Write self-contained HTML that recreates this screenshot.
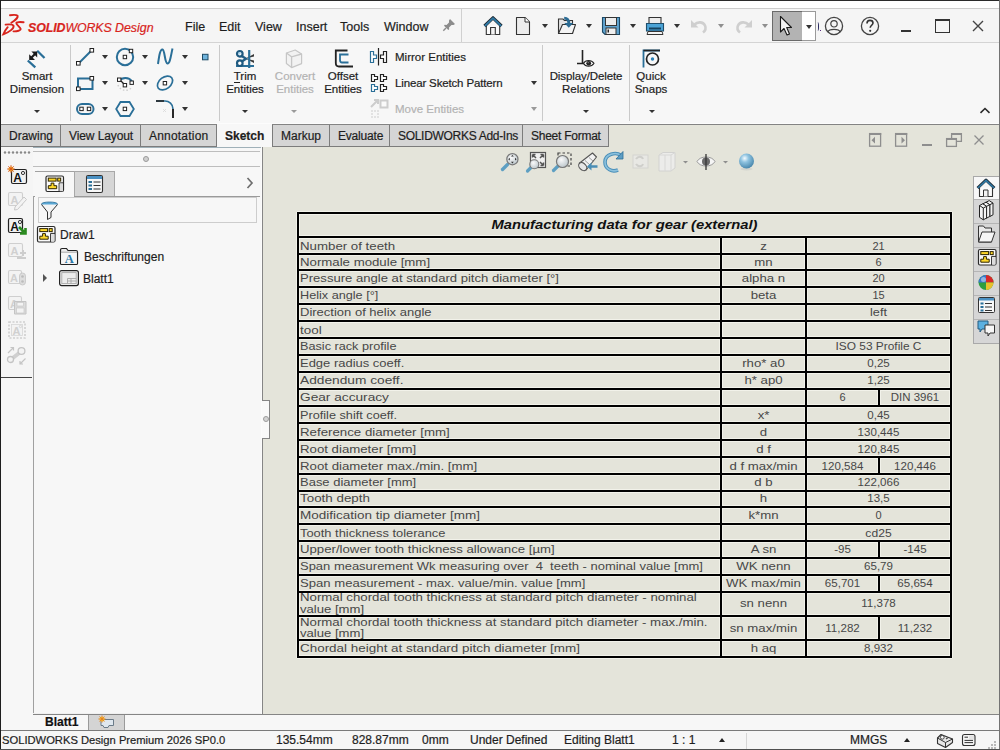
<!DOCTYPE html>
<html><head><meta charset="utf-8">
<style>
*{margin:0;padding:0;box-sizing:border-box}
html,body{width:1000px;height:750px;overflow:hidden;background:#f5f5f5;font-family:"Liberation Sans",sans-serif;color:#1a1a1a;position:relative}
.a{position:absolute}
svg{position:absolute;overflow:visible}
.t{position:absolute;white-space:nowrap;font-size:12px;line-height:14px;color:#1e1e1e;-webkit-text-stroke:0.2px currentColor}
.rb{position:absolute;white-space:nowrap;font-size:11.5px;line-height:13px;color:#1e1e1e;text-align:center;-webkit-text-stroke:0.2px currentColor}
.dd{position:absolute;width:0;height:0;border-left:3px solid transparent;border-right:3px solid transparent;border-top:3px solid #333}
#tbl .h{position:absolute;height:2px;background:#000}
#tbl .hh{box-shadow:0 -1px 0 #f2f2ea,0 1px 0 #f2f2ea}
#tbl .v{position:absolute;width:2px;background:#000}
#tbl .hv{box-shadow:-1px 0 0 #f2f2ea,1px 0 0 #f2f2ea}
#tbl .c{position:absolute;white-space:nowrap;font-size:11px;line-height:13px;color:#474747}
#tbl .c.l{transform-origin:0 0}
#tbl .c.m{text-align:center}
#tbl .c.ti{text-align:center;font-weight:bold;font-style:italic;font-size:13px;line-height:22px;color:#111;transform:scaleX(1.137)}
</style></head><body>

<!-- frame -->
<div class="a" style="left:0;top:0;width:1000px;height:1px;background:#2a2a2a"></div>
<div class="a" style="left:1px;top:1px;width:998px;height:7px;background:#fff"></div>
<div class="a" style="left:1px;top:8px;width:998px;height:1px;background:#cdcdcd"></div>
<div class="a" style="left:1px;top:9px;width:998px;height:33px;background:#f5f5f5"></div>
<div class="a" style="left:1px;top:42px;width:998px;height:1px;background:#d4d4d4"></div>
<div class="a" style="left:1px;top:43px;width:998px;height:81px;background:#f7f7f7"></div>
<div class="a" style="left:1px;top:123px;width:998px;height:1px;background:#fcfcfc"></div>
<div class="a" style="left:1px;top:124px;width:998px;height:1px;background:#838383"></div>
<div class="a" style="left:263px;top:125px;width:736px;height:589px;background:#e4e4da"></div>
<div class="a" style="left:1px;top:147px;width:262px;height:567px;background:#f7f7f7"></div>
<div class="a" style="left:1px;top:714px;width:998px;height:16px;background:#f7f7f7"></div>
<div class="a" style="left:1px;top:730px;width:998px;height:1px;background:#7a7a7a"></div>
<div class="a" style="left:1px;top:731px;width:998px;height:19px;background:#f6f6f6"></div>
<div class="a" style="left:0;top:0;width:1px;height:750px;background:#1e1e1e"></div>
<div class="a" style="left:999px;top:0;width:1px;height:750px;background:#737373"></div>

<!-- titlebar -->
<svg style="left:0;top:0" width="30" height="42" viewBox="0 0 30 42">
<g fill="none" stroke="#d8241c" stroke-width="1.9" stroke-linecap="round">
<path d="M10 15.3 C13 14.8 16.5 14.8 17.6 15.8 C18.2 17.2 15 20.5 11.3 22.8"/>
<path d="M5.6 24.6 C9 24.2 13 24.3 13.6 25.8 C14 28.5 9 32.5 3.3 34.3 C4.5 31.5 6 29.2 7.7 27.2"/>
<path d="M23.6 22.2 C20 21.8 16.8 22 16.3 23 C16 24.5 20 27 20.6 28.7 C21 30.5 17 31.5 13.5 31.4"/>
</g></svg>
<div class="t" style="left:28px;top:20px;font-size:12.4px;line-height:16px;color:#d8241c;font-style:italic;letter-spacing:-0.1px"><b style="font-weight:bold">SOLID</b>WORKS</div>
<div class="t" style="left:115px;top:20px;font-size:12.4px;line-height:16px;color:#d8241c;font-style:italic">Design</div>
<div class="t" style="left:185px;top:20px;font-size:12.5px;line-height:15px">File</div>
<div class="t" style="left:219px;top:20px;font-size:12.5px;line-height:15px">Edit</div>
<div class="t" style="left:255px;top:20px;font-size:12.5px;line-height:15px">View</div>
<div class="t" style="left:296px;top:20px;font-size:12.5px;line-height:15px">Insert</div>
<div class="t" style="left:340px;top:20px;font-size:12.5px;line-height:15px">Tools</div>
<div class="t" style="left:384px;top:20px;font-size:12.5px;line-height:15px">Window</div>
<!-- pin -->
<svg style="left:441px;top:17px" width="16" height="16" viewBox="0 0 16 16">
<path d="M9 2 L14 7 L12.5 8 L10.5 8 L8 10.5 L8.2 12.3 L7.3 13 L3 8.7 L3.7 7.8 L5.5 8 L8 5.5 L8 3.5 Z" fill="#8c8c8c"/>
<path d="M5 11 L2.3 13.7" stroke="#8c8c8c" stroke-width="1.4"/>
</svg>
<div class="a" style="left:461px;top:9px;width:1px;height:33px;background:#d0d0d0"></div>
<!-- home -->
<svg style="left:483px;top:16px" width="20" height="20" viewBox="0 0 20 20">
<path d="M3.3 9.5 V18.5 H16.7 V9.5" fill="#fbfbfb" stroke="#333" stroke-width="1.1"/>
<path d="M7.6 18.5 V11.5 H12.3 V18.5" fill="#f3f3f3" stroke="#333" stroke-width="1.1"/>
<path d="M1.5 10 L10 1.8 L18.5 10" fill="none" stroke="#1f2a33" stroke-width="3.2" stroke-linejoin="round"/>
<path d="M1.8 10 L10 2.2 L18.2 10" fill="none" stroke="#2f7aa6" stroke-width="1.8" stroke-linejoin="round"/>
</svg>
<!-- new doc -->
<svg style="left:515px;top:16px" width="16" height="20" viewBox="0 0 16 20">
<path d="M1.5 1.5 H10 L14.5 6 V18.5 H1.5 Z" fill="#ededed" stroke="#333" stroke-width="1.1" stroke-linejoin="round"/>
<path d="M10 1.5 V6 H14.5" fill="#fff" stroke="#333" stroke-width="1"/>
</svg>
<div class="dd" style="left:542px;top:24px;border-width:4px 3px 0 3px"></div>
<!-- open -->
<svg style="left:557px;top:16px" width="20" height="19" viewBox="0 0 20 19">
<path d="M1.5 3 H6 L7.5 4.5 H15.5 V17.5 H1.5 Z" fill="#e4e4e4" stroke="#333" stroke-width="1.1"/>
<path d="M1.5 17.5 L5.5 8.5 H18.5 L15.5 17.5 Z" fill="#f4f4f4" stroke="#333" stroke-width="1.1" stroke-linejoin="round"/>
<path d="M7.2 2.2 C10 2.2 11.8 3.8 11.8 7.5" fill="none" stroke="#2b6b93" stroke-width="2.8"/>
<path d="M7.3 7 H16.3 L11.8 11.8 Z" fill="#2b6b93"/>
</svg>
<div class="dd" style="left:586px;top:24px;border-width:4px 3px 0 3px"></div>
<!-- save -->
<svg style="left:601px;top:16px" width="20" height="20" viewBox="0 0 20 20">
<path d="M1.5 1.5 H18.5 V18.5 H4 L1.5 16 Z" fill="#5fa3cf" stroke="#1d4a66" stroke-width="1.1"/>
<rect x="4.5" y="1.5" width="11" height="8" fill="#ececec" stroke="#333" stroke-width="1"/>
<rect x="5" y="12" width="10" height="6.5" fill="#f0f0f0" stroke="#333" stroke-width="1"/>
<rect x="6.5" y="13.5" width="1.5" height="3" fill="#222"/>
</svg>
<div class="dd" style="left:630px;top:24px;border-width:4px 3px 0 3px"></div>
<!-- print -->
<svg style="left:645px;top:16px" width="20" height="20" viewBox="0 0 20 20">
<path d="M4 1.5 H16 V8 H4 Z" fill="#ececec" stroke="#333" stroke-width="1.1"/>
<path d="M1.5 7.5 H18.5 V15 H1.5 Z" fill="#4ba3d6" stroke="#1f4e6c" stroke-width="1.1"/>
<rect x="4" y="11.5" width="12" height="2" fill="#16425e"/>
<path d="M3 15.5 H17 L18 18.5 H2 Z" fill="#f4f4f4" stroke="#333" stroke-width="1"/>
</svg>
<div class="dd" style="left:674px;top:24px;border-width:4px 3px 0 3px"></div>
<!-- undo -->
<svg style="left:690px;top:18px" width="18" height="16" viewBox="0 0 18 16">
<path d="M4.5 6.5 C7.5 3.5 13 3.5 15 7.5 C16.3 10.5 15 13 13 14.5" fill="none" stroke="#cfcfcf" stroke-width="2.6"/>
<path d="M1 2 L1 9.5 L8.5 9.5 Z" fill="#cfcfcf"/>
</svg>
<div class="dd" style="left:718px;top:24px;border-width:4px 3px 0 3px;border-top-color:#8f8f8f"></div>
<!-- redo -->
<svg style="left:735px;top:18px" width="18" height="16" viewBox="0 0 18 16">
<path d="M13.5 6.5 C10.5 3.5 5 3.5 3 7.5 C1.7 10.5 3 13 5 14.5" fill="none" stroke="#cfcfcf" stroke-width="2.6"/>
<path d="M17 2 L17 9.5 L9.5 9.5 Z" fill="#cfcfcf"/>
</svg>
<div class="dd" style="left:762px;top:24px;border-width:4px 3px 0 3px;border-top-color:#8f8f8f"></div>
<!-- select -->
<div class="a" style="left:772px;top:11px;width:31px;height:30px;background:#b3b3b3;border:1px solid #6a6a6a"></div>
<div class="a" style="left:802px;top:11px;width:14px;height:30px;background:#fff;border:1px solid #9a9a9a;border-left:none"></div>
<svg style="left:779px;top:15px" width="16" height="22" viewBox="0 0 16 22">
<path d="M1.5 1.5 L1.5 17 L5 13.5 L8 20 L10.5 19 L7.7 12.5 L12.5 12.5 Z" fill="#f4f4f4" stroke="#1a1a1a" stroke-width="1.1" stroke-linejoin="round"/>
</svg>
<div class="dd" style="left:806px;top:25px;border-width:4px 3px 0 3px"></div>
<div class="a" style="left:816px;top:22px;width:3px;height:9px;border-right:1.5px solid #2a2a60;border-radius:0 50% 50% 0"></div>
<div class="a" style="left:820px;top:30px;width:1px;height:1px;background:#5b2a80"></div>
<!-- user -->
<svg style="left:824px;top:16px" width="20" height="20" viewBox="0 0 20 20">
<circle cx="10" cy="10" r="8.6" fill="none" stroke="#444" stroke-width="1.3"/>
<circle cx="10" cy="7.8" r="3.2" fill="none" stroke="#444" stroke-width="1.2"/>
<path d="M3.8 16 C5 12.5 15 12.5 16.2 16" fill="none" stroke="#444" stroke-width="1.2"/>
</svg>
<!-- help -->
<svg style="left:860px;top:16px" width="20" height="20" viewBox="0 0 20 20">
<circle cx="10" cy="10" r="8.6" fill="none" stroke="#444" stroke-width="1.3"/>
<path d="M7 7.5 C7 5 8.5 4.4 10 4.4 C11.7 4.4 13 5.5 13 7 C13 9 10.2 9.5 10.2 11.8" fill="none" stroke="#333" stroke-width="1.6"/>
<circle cx="10.2" cy="14.8" r="1.1" fill="#333"/>
</svg>
<div class="a" style="left:901px;top:30px;width:10px;height:2px;background:#333"></div>
<div class="a" style="left:935px;top:19px;width:15px;height:14px;border:1.2px solid #333;border-top:2.5px solid #333"></div>
<svg style="left:972px;top:20px" width="12" height="12" viewBox="0 0 12 12">
<path d="M1 1 L11 11 M11 1 L1 11" stroke="#444" stroke-width="1.4"/>
</svg>

<!-- ribbon -->
<!-- smart dimension -->
<svg style="left:27px;top:49px" width="20" height="20" viewBox="0 0 20 20">
<path d="M0.8 11.5 L8.3 18.3" stroke="#2a6f98" stroke-width="2.3"/>
<path d="M10.2 1.8 L17.5 9" stroke="#2a6f98" stroke-width="2.3"/>
<path d="M4 9 L8 5" stroke="#1a1a1a" stroke-width="2.2"/>
<path d="M2.2 5.2 V11 H8 Z" fill="#1a1a1a"/>
<path d="M10.2 2.6 V8.4 L4.4 2.6 Z" fill="#1a1a1a"/>
</svg>
<div class="rb" style="left:0;width:74px;top:70px">Smart</div>
<div class="rb" style="left:0;width:74px;top:83px">Dimension</div>
<div class="dd" style="left:34px;top:110px"></div>
<div class="a" style="left:70px;top:45px;width:1px;height:76px;background:#cacaca"></div>
<!-- sketch tool grid -->
<svg style="left:75px;top:47px" width="140" height="72" viewBox="0 0 140 72">
<g stroke-linejoin="miter">
<!-- line -->
<path d="M3.5 16.5 L16.5 3.5" stroke="#2a6f98" stroke-width="2"/>
<rect x="1.5" y="14.5" width="3.6" height="3.6" fill="#fff" stroke="#222" stroke-width="1"/>
<rect x="15" y="1.5" width="3.6" height="3.6" fill="#fff" stroke="#222" stroke-width="1"/>
<!-- rectangle -->
<rect x="3" y="31.5" width="14.5" height="10.5" fill="none" stroke="#2a6f98" stroke-width="2"/>
<rect x="1.5" y="40" width="3.6" height="3.6" fill="#fff" stroke="#222" stroke-width="1"/>
<rect x="15" y="29.5" width="3.6" height="3.6" fill="#fff" stroke="#222" stroke-width="1"/>
<!-- slot -->
<rect x="2" y="57" width="16.5" height="10" rx="5" fill="none" stroke="#2a6f98" stroke-width="2"/>
<rect x="4.8" y="60.2" width="3.4" height="3.4" fill="#fff" stroke="#222" stroke-width="1"/>
<rect x="12.3" y="60.2" width="3.4" height="3.4" fill="#fff" stroke="#222" stroke-width="1"/>
<!-- circle -->
<circle cx="50" cy="10" r="8.2" fill="none" stroke="#2a6f98" stroke-width="2"/>
<rect x="48.2" y="8.3" width="3.4" height="3.4" fill="#fff" stroke="#222" stroke-width="1"/>
<rect x="54.3" y="2.3" width="3.4" height="3.4" fill="#fff" stroke="#222" stroke-width="1"/>
<!-- arc -->
<path d="M44 34 A8 8 0 0 1 57 34.5" fill="none" stroke="#2a6f98" stroke-width="2"/>
<path d="M43 38 A8 8 0 0 0 57 40" fill="none" stroke="#d0d0d0" stroke-width="1.5" stroke-dasharray="1.5 2"/>
<path d="M44 32 L50 38" stroke="#222" stroke-width="1.3"/>
<rect x="42.5" y="31" width="3.4" height="3.4" fill="#fff" stroke="#222" stroke-width="1"/>
<rect x="48.2" y="36.5" width="3.4" height="3.4" fill="#fff" stroke="#222" stroke-width="1"/>
<rect x="55" y="34" width="3.4" height="3.4" fill="#fff" stroke="#222" stroke-width="1"/>
<!-- polygon -->
<path d="M45.5 55 L54.5 55 L58.8 62 L54.5 69 L45.5 69 L41.2 62 Z" fill="none" stroke="#2a6f98" stroke-width="1.8"/>
<rect x="48.2" y="60.2" width="3.4" height="3.4" fill="#fff" stroke="#222" stroke-width="1"/>
<!-- spline -->
<path d="M83 17 C84 10 85 2 87.5 2.5 C90 3 89.5 16 92.5 16.5 C95 16.8 96 8 97.5 1.5" fill="none" stroke="#2a6f98" stroke-width="2"/>
<!-- ellipse -->
<ellipse cx="90" cy="36" rx="8.5" ry="5.8" transform="rotate(-38 90 36)" fill="none" stroke="#2a6f98" stroke-width="1.7"/>
<rect x="88.2" y="34.5" width="3.4" height="3.4" fill="#fff" stroke="#222" stroke-width="1"/>
<!-- fillet -->
<path d="M81 54 H90 C94 54 98 57 98 62" fill="none" stroke="#2a6f98" stroke-width="1.6"/>
<path d="M81 54 H89" stroke="#222" stroke-width="1.6"/>
<path d="M98 62 V71" stroke="#111" stroke-width="1.8"/>
<path d="M88 62 L91 65 M91 62 L88 65" stroke="#d8d8d8" stroke-width="0.8"/>
<!-- point -->
<rect x="127.5" y="7.3" width="5.5" height="5.5" fill="#6fb3dc" stroke="#1d4a66" stroke-width="1"/>
</g></svg>
<div class="dd" style="left:102px;top:55px;border-width:4px 3px 0 3px"></div>
<div class="dd" style="left:102px;top:81px;border-width:4px 3px 0 3px"></div>
<div class="dd" style="left:102px;top:107px;border-width:4px 3px 0 3px"></div>
<div class="dd" style="left:142px;top:55px;border-width:4px 3px 0 3px"></div>
<div class="dd" style="left:142px;top:81px;border-width:4px 3px 0 3px"></div>
<div class="dd" style="left:182px;top:55px;border-width:4px 3px 0 3px"></div>
<div class="dd" style="left:182px;top:81px;border-width:4px 3px 0 3px"></div>
<div class="dd" style="left:182px;top:107px;border-width:4px 3px 0 3px"></div>
<div class="a" style="left:219px;top:45px;width:1px;height:76px;background:#cacaca"></div>
<!-- trim -->
<svg style="left:235px;top:49px" width="20" height="20" viewBox="0 0 20 20">
<path d="M10.5 9.5 L19 5 L19 7.5 Z M10.5 9.5 L19 14 L19 11.5 Z" fill="#3a3a3a"/>
<path d="M14.2 1 V19 M1 17 H19" stroke="#2a6f98" stroke-width="2.2"/>
<path d="M6 6.5 L11 9.8 L6 13" fill="none" stroke="#245f86" stroke-width="2.4"/>
<circle cx="4.8" cy="4.8" r="2.8" fill="#fff" stroke="#1f5a80" stroke-width="2.2"/>
<circle cx="4.8" cy="14.2" r="2.8" fill="#fff" stroke="#1f5a80" stroke-width="2.2"/>
<circle cx="4.3" cy="4.3" r="1.2" fill="#7cc0e6" opacity="0.6"/>
</svg>
<div class="rb" style="left:214px;width:62px;top:70px"><u style="text-decoration:none;border-bottom:1px solid #222">T</u>rim</div>
<div class="rb" style="left:214px;width:62px;top:83px">Entities</div>
<div class="dd" style="left:242px;top:110px"></div>
<!-- convert -->
<svg style="left:285px;top:49px" width="20" height="20" viewBox="0 0 20 20">
<path d="M10.2 1 L16.6 5 V14.6 L6.6 18.6 L1.4 14.6 V4 Z" fill="#f2f2f2" stroke="#c6c6c6" stroke-width="1.2" stroke-linejoin="round"/>
<path d="M1.4 4 L6.6 7.8 L16.6 5 M6.6 7.8 V18.6" fill="none" stroke="#c6c6c6" stroke-width="1.3"/>
</svg>
<div class="rb" style="left:264px;width:62px;top:70px;color:#b3b3b3">Convert</div>
<div class="rb" style="left:264px;width:62px;top:83px;color:#b3b3b3">Entities</div>
<div class="dd" style="left:291px;top:110px;border-top-color:#9a9a9a"></div>
<!-- offset -->
<svg style="left:334px;top:49px" width="20" height="20" viewBox="0 0 20 20">
<path d="M13.5 1.5 H1.8 V14 C1.8 16 3 17.5 5 17.5 H19" fill="none" stroke="#222" stroke-width="1.8"/>
<path d="M14.5 5.5 H6 V11 C6 12.5 6.8 13.5 8 13.5 H14.5" fill="none" stroke="#2a6f98" stroke-width="1.8"/>
</svg>
<div class="rb" style="left:312px;width:62px;top:70px">Offset</div>
<div class="rb" style="left:312px;width:62px;top:83px">Entities</div>
<!-- mirror / linear / move -->
<svg style="left:369px;top:49px" width="20" height="72" viewBox="0 0 20 72">
<path d="M1.5 2.5 H4.5 V6 H7.5 V9.5 H4.5 V13.5 H1.5 Z" fill="#fff" stroke="#2a6f98" stroke-width="1.2"/>
<path d="M17.5 2.5 H14.5 V6 H11.5 V9.5 H14.5 V13.5 H17.5 Z" fill="#fff" stroke="#222" stroke-width="1.2"/>
<path d="M9.5 -1 V16.5" stroke="#222" stroke-width="1.2"/>
<path d="M2.5 25.5 H5.5 V27.5 H8.5 V30.5 H5.5 V32.5 H2.5 Z" fill="#fff" stroke="#222" stroke-width="1.2"/><path d="M11.5 25.5 H14.5 V27.5 H17.5 V30.5 H14.5 V32.5 H11.5 Z" fill="#fff" stroke="#222" stroke-width="1.2"/><path d="M2.5 35.5 H5.5 V37.5 H8.5 V40.5 H5.5 V42.5 H2.5 Z" fill="#fff" stroke="#2a6f98" stroke-width="1.2"/><path d="M11.5 35.5 H14.5 V37.5 H17.5 V40.5 H14.5 V42.5 H11.5 Z" fill="#fff" stroke="#222" stroke-width="1.2"/>
<path d="M2 58 L9 51 M5 51 H9 V55" fill="none" stroke="#cdcdcd" stroke-width="2"/>
<rect x="11.5" y="51.5" width="7" height="7" fill="#fafafa" stroke="#cdcdcd" stroke-width="2"/>
<g fill="#e2e2e2"><rect x="2" y="61" width="2" height="2"/><rect x="5" y="61" width="2" height="2"/><rect x="8" y="61" width="2" height="2"/><rect x="2" y="64" width="2" height="2"/><rect x="8" y="64" width="2" height="2"/><rect x="2" y="67" width="2" height="2"/><rect x="5" y="67" width="2" height="2"/><rect x="8" y="67" width="2" height="2"/></g>
</svg>
<div class="t" style="left:395px;top:50px;font-size:11.5px;line-height:14px">Mirror Entities</div>
<div class="t" style="left:395px;top:76px;font-size:11.5px;line-height:14px;letter-spacing:-0.15px">Linear Sketch Pattern</div>
<div class="t" style="left:395px;top:102px;font-size:11.5px;line-height:14px;color:#b3b3b3">Move Entities</div>
<div class="dd" style="left:531px;top:81px;border-width:4px 3px 0 3px"></div>
<div class="dd" style="left:531px;top:107px;border-width:4px 3px 0 3px;border-top-color:#9a9a9a"></div>
<div class="a" style="left:542px;top:45px;width:1px;height:76px;background:#cacaca"></div>
<!-- display/delete relations -->
<svg style="left:576px;top:49px" width="20" height="20" viewBox="0 0 20 20">
<path d="M6.5 1 V14.5 M1 14.5 H9" stroke="#222" stroke-width="1.6"/>
<path d="M7.5 14.3 C9.5 10.5 15.5 10.5 18 14.3 C15.5 18.2 9.5 18.2 7.5 14.3 Z" fill="#fff" stroke="#222" stroke-width="1.1"/>
<circle cx="12.7" cy="14.3" r="2.4" fill="#222"/>
<circle cx="12.2" cy="13.6" r="0.7" fill="#888"/>
</svg>
<div class="rb" style="left:543px;width:86px;top:70px;letter-spacing:-0.1px">Display/Delete</div>
<div class="rb" style="left:543px;width:86px;top:83px">Relations</div>
<div class="dd" style="left:583px;top:110px"></div>
<div class="a" style="left:629px;top:45px;width:1px;height:76px;background:#cacaca"></div>
<!-- quick snaps -->
<svg style="left:642px;top:49px" width="20" height="20" viewBox="0 0 20 20">
<path d="M1.5 18.5 V1.5 H18" stroke="#2a6f98" stroke-width="1.8" fill="none"/>
<path d="M1.5 1.5 H18" stroke="#222" stroke-width="1.6"/>
<circle cx="10.5" cy="10" r="6" fill="none" stroke="#222" stroke-width="1.7"/>
<circle cx="10.5" cy="10" r="1.7" fill="#2a7fb5"/>
</svg>
<div class="rb" style="left:621px;width:60px;top:70px">Quick</div>
<div class="rb" style="left:621px;width:60px;top:83px">Snaps</div>
<div class="dd" style="left:649px;top:110px"></div>
<svg style="left:978px;top:105px" width="14" height="10" viewBox="0 0 14 10">
<path d="M2.5 7.8 L7 3.5 L11.5 7.8" fill="none" stroke="#2a2a2a" stroke-width="1.6"/>
</svg>

<!-- tabs -->
<div class="a" style="left:1px;top:125px;width:608px;height:21px;background:#d5d5d5"></div>
<div class="a" style="left:1px;top:146px;width:608px;height:1px;background:#7c7c7c"></div>
<!-- active sketch tab -->
<div class="a" style="left:217px;top:124px;width:55px;height:23px;background:#f7f7f7"></div>
<div class="a" style="left:60px;top:125px;width:1px;height:21px;background:#7c7c7c"></div>
<div class="a" style="left:140px;top:125px;width:1px;height:21px;background:#7c7c7c"></div>
<div class="a" style="left:216px;top:125px;width:1px;height:21px;background:#7c7c7c"></div>
<div class="a" style="left:272px;top:125px;width:1px;height:21px;background:#7c7c7c"></div>
<div class="a" style="left:329px;top:125px;width:1px;height:21px;background:#7c7c7c"></div>
<div class="a" style="left:389px;top:125px;width:1px;height:21px;background:#7c7c7c"></div>
<div class="a" style="left:522px;top:125px;width:1px;height:21px;background:#7c7c7c"></div>
<div class="a" style="left:608px;top:125px;width:1px;height:22px;background:#7c7c7c"></div>
<div class="t" style="left:9px;top:129px">Drawing</div>
<div class="t" style="left:69px;top:129px;letter-spacing:-0.1px">View Layout</div>
<div class="t" style="left:149px;top:129px;letter-spacing:0.2px">Annotation</div>
<div class="t" style="left:225px;top:129px;font-weight:bold">Sketch</div>
<div class="t" style="left:281px;top:129px">Markup</div>
<div class="t" style="left:338px;top:129px;letter-spacing:-0.2px">Evaluate</div>
<div class="t" style="left:398px;top:129px;letter-spacing:-0.3px">SOLIDWORKS Add-Ins</div>
<div class="t" style="left:531px;top:129px;letter-spacing:-0.25px">Sheet Format</div>

<!-- gfx -->
<!-- heads-up toolbar -->
<svg style="left:500px;top:150px" width="260" height="24" viewBox="0 0 260 24">
<defs>
<radialGradient id="lens" cx="0.4" cy="0.35" r="0.7"><stop offset="0" stop-color="#fafafa"/><stop offset="1" stop-color="#b9c4c9"/></radialGradient>
<radialGradient id="sph" cx="0.38" cy="0.32" r="0.75"><stop offset="0" stop-color="#f4fbff"/><stop offset="0.35" stop-color="#8fc3e0"/><stop offset="1" stop-color="#3f7fa6"/></radialGradient>
</defs>
<!-- zoom to fit -->
<path d="M2.5 19.5 L7.5 14.5" stroke="#5e9fc2" stroke-width="3.4" stroke-linecap="round"/>
<circle cx="12.4" cy="9.2" r="5.6" fill="url(#lens)" stroke="#777" stroke-width="1.2"/>
<path d="M12.4 5 L11 6.6 H13.8 Z M12.4 13.4 L11 11.8 H13.8 Z M8.2 9.2 L9.8 7.8 V10.6 Z M16.6 9.2 L15 7.8 V10.6 Z" fill="#333"/>
<!-- zoom to area box -->
<rect x="30.5" y="2.5" width="15" height="15" fill="#f0f0f0" stroke="#555" stroke-width="1.2"/>
<path d="M32.5 4.5 L36 8 M32.5 4.5 H35.5 M32.5 4.5 V7.5 M43.5 4.5 L40 8 M43.5 4.5 H40.5 M43.5 4.5 V7.5 M43.5 15.5 L40 12 M43.5 15.5 H40.5 M43.5 15.5 V12.5" stroke="#555" stroke-width="1.5" fill="none"/>
<path d="M27.5 21 L31 17.5" stroke="#5e9fc2" stroke-width="3.2" stroke-linecap="round"/>
<circle cx="34.3" cy="14.3" r="4.5" fill="url(#lens)" stroke="#777" stroke-width="1.1"/>
<!-- zoom area dashed -->
<path d="M58 3 H71 V16 H58 Z" fill="none" stroke="#444" stroke-width="1.2" stroke-dasharray="2.5 2"/>
<path d="M53.5 20.5 L58 16" stroke="#5e9fc2" stroke-width="3.2" stroke-linecap="round"/>
<circle cx="62.5" cy="11.5" r="6" fill="url(#lens)" stroke="#777" stroke-width="1.2"/>
<!-- previous view -->
<path d="M79.3 13.2 L92.5 3 L96.5 7 L86.1 20 Z" fill="#f2f2f2" stroke="#555" stroke-width="1.1" stroke-linejoin="round"/>
<ellipse cx="82.7" cy="16.6" rx="4.6" ry="3.3" transform="rotate(45 82.7 16.6)" fill="#e6e6e6" stroke="#555" stroke-width="1.1"/>
<path d="M85 10.5 L90 15 M89 7.5 L93.5 11.5" stroke="#888" stroke-width="0.8"/>
<path d="M87 16.5 L91.5 12.5 V15.2 H97.5 V17.8 H91.5 V20.5 Z" fill="#4a8db5"/>
<!-- rotate -->
<path d="M121 5.5 C116 1.5 105 4 105 12 C105 19 112 22.5 118 20" fill="none" stroke="#4a8fb8" stroke-width="3.6"/>
<path d="M121 5.5 C116 1.5 105 4 105 12 C105 19 112 22.5 118 20" fill="none" stroke="#8cc1dd" stroke-width="1.6"/>
<path d="M123 1.5 V9 H116 Z" fill="#5d9dc4" stroke="#2f6f98" stroke-width="0.8"/>
<!-- disabled icon -->
<rect x="133" y="5" width="15" height="13" fill="#e8e8e4" stroke="#d4d4d0" stroke-width="1"/>
<path d="M136 9 C138 6 142 6 143 9 M136 14 C138 17 142 17 143 14" stroke="#cfcfcb" stroke-width="2" fill="none"/>
<!-- cube -->
<path d="M159 5 L163 2.5 H175 V18 L171 21 H159 Z" fill="#ececea" stroke="#d2d2d0" stroke-width="1"/>
<path d="M159 5 H171 V21 M171 5 L175 2.5 M165 5 V21" stroke="#d8d8d6" stroke-width="1" fill="none"/>
<path d="M183 11 H188 L185.5 13.5 Z" fill="#8e8e8e"/>
<!-- eye -->
<path d="M197 11.5 C200 5.5 212 5.5 215 11.5 C212 17.5 200 17.5 197 11.5 Z" fill="#f5f5f5" stroke="#9a9a9a" stroke-width="1"/>
<circle cx="206" cy="11.5" r="4" fill="#6b6b6b"/>
<path d="M206 4 V20" stroke="#333" stroke-width="1.3"/>
<path d="M223 11 H228 L225.5 13.5 Z" fill="#8e8e8e"/>
<!-- sphere -->
<ellipse cx="246.5" cy="19" rx="6" ry="1.5" fill="#c8ccc8" opacity="0.6"/>
<circle cx="246.5" cy="11" r="7.5" fill="url(#sph)"/>
</svg>
<!-- window controls -->
<svg style="left:866px;top:130px" width="122" height="20" viewBox="0 0 122 20">
<g fill="none" stroke="#8e8e8e" stroke-width="1.3">
<rect x="3.6" y="3.6" width="11" height="12.6"/>
<rect x="29.6" y="3.6" width="11" height="12.6"/>
<path d="M85.6 8.6 V3.6 H95.4 V11.4 H90.4"/>
<rect x="80.6" y="8.6" width="9.8" height="7.8"/>
<path d="M108.5 5.5 L117.5 14.5 M117.5 5.5 L108.5 14.5"/>
</g>
<path d="M3 3 H15.2 V5 H3 Z M29 3 H41.2 V5 H29 Z M85 3 H96 V5 H85 Z M80 8 H91 V10 H80 Z" fill="#8e8e8e"/>
<path d="M5.5 10.2 L9 6.8 V13.6 Z" fill="#8e8e8e"/>
<path d="M39 10.2 L35.5 6.8 V13.6 Z" fill="#8e8e8e"/>
<rect x="56" y="14" width="10" height="2" fill="#8e8e8e"/>
</svg>
<!-- task pane -->
<div class="a" style="left:973px;top:176px;width:26px;height:168px;background:#d6d6d6;border:1px solid #a9a9a9;border-right:none"></div>
<div class="a" style="left:974px;top:177px;width:25px;height:22px;background:#f7f7f7"></div>
<div class="a" style="left:974px;top:199px;width:25px;height:1px;background:#b5b5b5"></div>
<div class="a" style="left:974px;top:223px;width:25px;height:1px;background:#b5b5b5"></div>
<div class="a" style="left:974px;top:247px;width:25px;height:1px;background:#b5b5b5"></div>
<div class="a" style="left:974px;top:271px;width:25px;height:1px;background:#b5b5b5"></div>
<div class="a" style="left:974px;top:295px;width:25px;height:1px;background:#b5b5b5"></div>
<div class="a" style="left:974px;top:319px;width:25px;height:1px;background:#b5b5b5"></div>
<svg style="left:976px;top:178px" width="22" height="165" viewBox="0 0 22 165">
<!-- home -->
<path d="M3.5 9.5 V18.5 H16.5 V9.5" fill="#fbfbfb" stroke="#333" stroke-width="1.1"/>
<path d="M7.5 18.5 V12 H12 V18.5" fill="#f3f3f3" stroke="#333" stroke-width="1"/>
<path d="M1.6 10 L10 2 L18.4 10" fill="none" stroke="#1f2a33" stroke-width="3" stroke-linejoin="round"/>
<path d="M1.9 10 L10 2.4 L18.1 10" fill="none" stroke="#2f7aa6" stroke-width="1.6" stroke-linejoin="round"/>
<!-- library -->
<path d="M9.9 24.3 L13.2 22.6 L17.0 25.1 L17.0 36.8 L13.7 38.6 L9.9 36.1 Z" fill="#f4f4f4" stroke="#222" stroke-width="1" stroke-linejoin="round"/>
<path d="M9.9 24.3 L13.7 26.8 L17.0 25.1 M13.7 26.8 V38.6" fill="none" stroke="#222" stroke-width="1"/>
<path d="M6.7 25.9 L10.0 24.2 L13.8 26.7 L13.8 38.4 L10.5 40.2 L6.7 37.7 Z" fill="#f4f4f4" stroke="#222" stroke-width="1" stroke-linejoin="round"/>
<path d="M6.7 25.9 L10.5 28.4 L13.8 26.7 M10.5 28.4 V40.2" fill="none" stroke="#222" stroke-width="1"/>
<path d="M3.5 27.5 L6.8 25.8 L10.6 28.3 L10.6 40.0 L7.3 41.8 L3.5 39.3 Z" fill="#f4f4f4" stroke="#222" stroke-width="1" stroke-linejoin="round"/>
<path d="M3.5 27.5 L7.3 30.0 L10.6 28.3 M7.3 30.0 V41.8" fill="none" stroke="#222" stroke-width="1"/>
<!-- folder -->
<path d="M2.5 48 H7.5 L9 50 H15.5 V64 H2.5 Z" fill="#e9e9e9" stroke="#333" stroke-width="1"/>
<path d="M2.5 64 L6 54 H19 L15.5 64 Z" fill="#f6f6f6" stroke="#333" stroke-width="1" stroke-linejoin="round"/>
<!-- design tree -->
<rect x="2.5" y="71.5" width="17.5" height="15.5" rx="1.5" fill="#fafafa" stroke="#2a2a2a" stroke-width="1.2"/>
<rect x="4.8" y="73.6" width="7.8" height="3" fill="#ffd92a" stroke="#2e2400" stroke-width="1"/>
<rect x="14.2" y="73.6" width="3" height="3" fill="#ffd92a" stroke="#2e2400" stroke-width="1"/>
<path d="M7.6 78.6 H10.4 V81.2 H13.2 V84.2 H4.8 V81.2 H7.6 Z" fill="#ffd92a" stroke="#2e2400" stroke-width="1"/>
<path d="M15.6 87.0 V78.4 H20.0" fill="none" stroke="#2a2a2a" stroke-width="1"/>
<rect x="16.3" y="79.2" width="3.1999999999999993" height="7.5" fill="#dcdcdc"/>
<!-- appearances ball -->
<circle cx="10" cy="104.5" r="7.5" fill="#2e9e3e"/>
<path d="M10 104.5 L2.5 104.5 A7.5 7.5 0 0 1 10 97 Z" fill="#3a77c9"/>
<path d="M10 104.5 V97 A7.5 7.5 0 0 1 17.5 104.5 Z" fill="#d8282a"/>
<path d="M10 104.5 H17.5 A7.5 7.5 0 0 1 10 112 Z" fill="#e8c12d"/>
<circle cx="7.5" cy="101.5" r="2.5" fill="#fff" opacity="0.45"/>
<!-- custom props -->
<rect x="2.5" y="119.5" width="16" height="15" rx="1" fill="#f8f8f8" stroke="#333" stroke-width="1"/>
<rect x="3" y="120" width="15" height="2.5" fill="#4a90c2"/>
<rect x="4.5" y="124.5" width="3" height="2" fill="#2a6f98"/>
<rect x="4.5" y="128" width="3" height="2" fill="#2a6f98"/>
<rect x="4.5" y="131.5" width="3" height="2" fill="#2a6f98"/>
<path d="M9 125.5 H16 M9 129 H16 M9 132.5 H16" stroke="#333" stroke-width="1"/>
<!-- forum -->
<path d="M2 143 H12 V151 H6 L4 154 V151 H2 Z" fill="#5bb0e0" stroke="#245c80" stroke-width="1"/>
<path d="M9 147 H18.5 V155 H14 L12 158 V155 H9 Z" fill="#f6f6f6" stroke="#333" stroke-width="1"/>
</svg>

<!-- table -->
<div id="tbl">
<div class="v hv" style="left:297px;top:212px;height:446px"></div>
<div class="v hv" style="left:950px;top:212px;height:446px"></div>
<div class="h hh" style="left:297px;top:212px;width:655px"></div>
<div class="h hh" style="left:297px;top:236px;width:655px"></div>
<div class="h hh" style="left:297px;top:253px;width:655px"></div>
<div class="h hh" style="left:297px;top:269px;width:655px"></div>
<div class="h hh" style="left:297px;top:286px;width:655px"></div>
<div class="h hh" style="left:297px;top:303px;width:655px"></div>
<div class="h hh" style="left:297px;top:320px;width:655px"></div>
<div class="h hh" style="left:297px;top:337px;width:655px"></div>
<div class="h hh" style="left:297px;top:354px;width:655px"></div>
<div class="h hh" style="left:297px;top:371px;width:655px"></div>
<div class="h hh" style="left:297px;top:388px;width:655px"></div>
<div class="h hh" style="left:297px;top:405px;width:655px"></div>
<div class="h hh" style="left:297px;top:422px;width:655px"></div>
<div class="h hh" style="left:297px;top:439px;width:655px"></div>
<div class="h hh" style="left:297px;top:456px;width:655px"></div>
<div class="h hh" style="left:297px;top:473px;width:655px"></div>
<div class="h hh" style="left:297px;top:490px;width:655px"></div>
<div class="h hh" style="left:297px;top:506px;width:655px"></div>
<div class="h hh" style="left:297px;top:523px;width:655px"></div>
<div class="h hh" style="left:297px;top:540px;width:655px"></div>
<div class="h hh" style="left:297px;top:557px;width:655px"></div>
<div class="h hh" style="left:297px;top:574px;width:655px"></div>
<div class="h hh" style="left:297px;top:591px;width:655px"></div>
<div class="h hh" style="left:297px;top:615px;width:655px"></div>
<div class="h hh" style="left:297px;top:639px;width:655px"></div>
<div class="h hh" style="left:297px;top:656px;width:655px"></div>
<div class="v hv" style="left:720px;top:236px;height:422px"></div>
<div class="v hv" style="left:805px;top:236px;height:422px"></div>
<div class="v hv" style="left:878px;top:388px;height:19px"></div>
<div class="v hv" style="left:878px;top:456px;height:19px"></div>
<div class="v hv" style="left:878px;top:540px;height:19px"></div>
<div class="v hv" style="left:878px;top:574px;height:19px"></div>
<div class="v hv" style="left:878px;top:615px;height:26px"></div>
<div class="v" style="left:297px;top:212px;height:446px"></div>
<div class="v" style="left:950px;top:212px;height:446px"></div>
<div class="h" style="left:297px;top:212px;width:655px"></div>
<div class="h" style="left:297px;top:236px;width:655px"></div>
<div class="h" style="left:297px;top:253px;width:655px"></div>
<div class="h" style="left:297px;top:269px;width:655px"></div>
<div class="h" style="left:297px;top:286px;width:655px"></div>
<div class="h" style="left:297px;top:303px;width:655px"></div>
<div class="h" style="left:297px;top:320px;width:655px"></div>
<div class="h" style="left:297px;top:337px;width:655px"></div>
<div class="h" style="left:297px;top:354px;width:655px"></div>
<div class="h" style="left:297px;top:371px;width:655px"></div>
<div class="h" style="left:297px;top:388px;width:655px"></div>
<div class="h" style="left:297px;top:405px;width:655px"></div>
<div class="h" style="left:297px;top:422px;width:655px"></div>
<div class="h" style="left:297px;top:439px;width:655px"></div>
<div class="h" style="left:297px;top:456px;width:655px"></div>
<div class="h" style="left:297px;top:473px;width:655px"></div>
<div class="h" style="left:297px;top:490px;width:655px"></div>
<div class="h" style="left:297px;top:506px;width:655px"></div>
<div class="h" style="left:297px;top:523px;width:655px"></div>
<div class="h" style="left:297px;top:540px;width:655px"></div>
<div class="h" style="left:297px;top:557px;width:655px"></div>
<div class="h" style="left:297px;top:574px;width:655px"></div>
<div class="h" style="left:297px;top:591px;width:655px"></div>
<div class="h" style="left:297px;top:615px;width:655px"></div>
<div class="h" style="left:297px;top:639px;width:655px"></div>
<div class="h" style="left:297px;top:656px;width:655px"></div>
<div class="v" style="left:720px;top:236px;height:422px"></div>
<div class="v" style="left:805px;top:236px;height:422px"></div>
<div class="v" style="left:878px;top:388px;height:19px"></div>
<div class="v" style="left:878px;top:456px;height:19px"></div>
<div class="v" style="left:878px;top:540px;height:19px"></div>
<div class="v" style="left:878px;top:574px;height:19px"></div>
<div class="v" style="left:878px;top:615px;height:26px"></div>
<div class="c ti" style="left:299px;width:651px;top:214px;height:22px">Manufacturing data for gear (external)</div>
<div class="c l" style="left:300px;top:240px;transform:scaleX(1.206)">Number of teeth</div>
<div class="c m" style="left:722px;width:83px;top:240px;transform:scaleX(1.2)">z</div>
<div class="c m" style="left:807px;width:143px;top:240px;transform:scaleX(1.0)">21</div>
<div class="c l" style="left:300px;top:256px;transform:scaleX(1.202)">Normale module [mm]</div>
<div class="c m" style="left:722px;width:83px;top:256px;transform:scaleX(1.2)">mn</div>
<div class="c m" style="left:807px;width:143px;top:256px;transform:scaleX(1.0)">6</div>
<div class="c l" style="left:300px;top:272px;transform:scaleX(1.189)">Pressure angle at standard pitch diameter [°]</div>
<div class="c m" style="left:722px;width:83px;top:272px;transform:scaleX(1.2)">alpha n</div>
<div class="c m" style="left:807px;width:143px;top:272px;transform:scaleX(1.0)">20</div>
<div class="c l" style="left:300px;top:289px;transform:scaleX(1.151)">Helix angle [°]</div>
<div class="c m" style="left:722px;width:83px;top:289px;transform:scaleX(1.2)">beta</div>
<div class="c m" style="left:807px;width:143px;top:289px;transform:scaleX(1.0)">15</div>
<div class="c l" style="left:300px;top:306px;transform:scaleX(1.182)">Direction of helix angle</div>
<div class="c m" style="left:807px;width:143px;top:306px;transform:scaleX(1.15)">left</div>
<div class="c l" style="left:300px;top:324px;transform:scaleX(1.223)">tool</div>
<div class="c l" style="left:300px;top:340px;transform:scaleX(1.152)">Basic rack profile</div>
<div class="c m" style="left:807px;width:143px;top:340px;transform:scaleX(1.08)">ISO 53 Profile C</div>
<div class="c l" style="left:300px;top:357px;transform:scaleX(1.179)">Edge radius coeff.</div>
<div class="c m" style="left:722px;width:83px;top:357px;transform:scaleX(1.2)">rho* a0</div>
<div class="c m" style="left:807px;width:143px;top:357px;transform:scaleX(1.05)">0,25</div>
<div class="c l" style="left:300px;top:374px;transform:scaleX(1.247)">Addendum coeff.</div>
<div class="c m" style="left:722px;width:83px;top:374px;transform:scaleX(1.2)">h* ap0</div>
<div class="c m" style="left:807px;width:143px;top:374px;transform:scaleX(1.05)">1,25</div>
<div class="c l" style="left:300px;top:391px;transform:scaleX(1.243)">Gear accuracy</div>
<div class="c m" style="left:807px;width:71px;top:391px;transform:scaleX(1.0)">6</div>
<div class="c m" style="left:880px;width:70px;top:391px;transform:scaleX(1.04)">DIN 3961</div>
<div class="c l" style="left:300px;top:409px;transform:scaleX(1.154)">Profile shift coeff.</div>
<div class="c m" style="left:722px;width:83px;top:409px;transform:scaleX(1.2)">x*</div>
<div class="c m" style="left:807px;width:143px;top:409px;transform:scaleX(1.05)">0,45</div>
<div class="c l" style="left:300px;top:426px;transform:scaleX(1.206)">Reference diameter [mm]</div>
<div class="c m" style="left:722px;width:83px;top:426px;transform:scaleX(1.2)">d</div>
<div class="c m" style="left:807px;width:143px;top:426px;transform:scaleX(1.05)">130,445</div>
<div class="c l" style="left:300px;top:443px;transform:scaleX(1.202)">Root diameter [mm]</div>
<div class="c m" style="left:722px;width:83px;top:443px;transform:scaleX(1.2)">d f</div>
<div class="c m" style="left:807px;width:143px;top:443px;transform:scaleX(1.05)">120,845</div>
<div class="c l" style="left:300px;top:460px;transform:scaleX(1.203)">Root diameter max./min. [mm]</div>
<div class="c m" style="left:722px;width:83px;top:460px;transform:scaleX(1.2)">d f max/min</div>
<div class="c m" style="left:807px;width:71px;top:460px;transform:scaleX(1.05)">120,584</div>
<div class="c m" style="left:880px;width:70px;top:460px;transform:scaleX(1.05)">120,446</div>
<div class="c l" style="left:300px;top:476px;transform:scaleX(1.180)">Base diameter [mm]</div>
<div class="c m" style="left:722px;width:83px;top:476px;transform:scaleX(1.2)">d b</div>
<div class="c m" style="left:807px;width:143px;top:476px;transform:scaleX(1.05)">122,066</div>
<div class="c l" style="left:300px;top:492px;transform:scaleX(1.216)">Tooth depth</div>
<div class="c m" style="left:722px;width:83px;top:492px;transform:scaleX(1.2)">h</div>
<div class="c m" style="left:807px;width:143px;top:492px;transform:scaleX(1.05)">13,5</div>
<div class="c l" style="left:300px;top:509px;transform:scaleX(1.226)">Modification tip diameter [mm]</div>
<div class="c m" style="left:722px;width:83px;top:509px;transform:scaleX(1.2)">k*mn</div>
<div class="c m" style="left:807px;width:143px;top:509px;transform:scaleX(1.0)">0</div>
<div class="c l" style="left:300px;top:527px;transform:scaleX(1.172)">Tooth thickness tolerance</div>
<div class="c m" style="left:807px;width:143px;top:527px;transform:scaleX(1.1)">cd25</div>
<div class="c l" style="left:300px;top:543px;transform:scaleX(1.199)">Upper/lower tooth thickness allowance [µm]</div>
<div class="c m" style="left:722px;width:83px;top:543px;transform:scaleX(1.2)">A sn</div>
<div class="c m" style="left:807px;width:71px;top:543px;transform:scaleX(1.05)">-95</div>
<div class="c m" style="left:880px;width:70px;top:543px;transform:scaleX(1.05)">-145</div>
<div class="c l" style="left:300px;top:560px;transform:scaleX(1.179)">Span measurement Wk measuring over &nbsp;4 &nbsp;teeth - nominal value [mm]</div>
<div class="c m" style="left:722px;width:83px;top:560px;transform:scaleX(1.2)">WK nenn</div>
<div class="c m" style="left:807px;width:143px;top:560px;transform:scaleX(1.05)">65,79</div>
<div class="c l" style="left:300px;top:577px;transform:scaleX(1.191)">Span measurement - max. value/min. value [mm]</div>
<div class="c m" style="left:722px;width:83px;top:577px;transform:scaleX(1.2)">WK max/min</div>
<div class="c m" style="left:807px;width:71px;top:577px;transform:scaleX(1.05)">65,701</div>
<div class="c m" style="left:880px;width:70px;top:577px;transform:scaleX(1.05)">65,654</div>
<div class="c l" style="left:300px;top:591px;transform:scaleX(1.204)">Normal chordal tooth thickness at standard pitch diameter - nominal</div>
<div class="c l" style="left:300px;top:603px;transform:scaleX(1.19)">value [mm]</div>
<div class="c m" style="left:722px;width:83px;top:597px;transform:scaleX(1.2)">sn nenn</div>
<div class="c m" style="left:807px;width:143px;top:597px;transform:scaleX(1.05)">11,378</div>
<div class="c l" style="left:300px;top:616px;transform:scaleX(1.203)">Normal chordal tooth thickness at standard pitch diameter - max./min.</div>
<div class="c l" style="left:300px;top:627px;transform:scaleX(1.19)">value [mm]</div>
<div class="c m" style="left:722px;width:83px;top:622px;transform:scaleX(1.2)">sn max/min</div>
<div class="c m" style="left:807px;width:71px;top:622px;transform:scaleX(1.05)">11,282</div>
<div class="c m" style="left:880px;width:70px;top:622px;transform:scaleX(1.05)">11,232</div>
<div class="c l" style="left:300px;top:642px;transform:scaleX(1.221)">Chordal height at standard pitch diameter [mm]</div>
<div class="c m" style="left:722px;width:83px;top:642px;transform:scaleX(1.2)">h aq</div>
<div class="c m" style="left:807px;width:143px;top:642px;transform:scaleX(1.05)">8,932</div>
</div>
<!-- fm -->
<!-- FM panel -->
<div class="a" style="left:33px;top:147px;width:229px;height:567px;background:#f7f7f7"></div>
<div class="a" style="left:33px;top:147px;width:228px;height:1px;background:#9fb0b8"></div>
<div class="a" style="left:33px;top:151px;width:227px;height:1px;background:#bdbdbd"></div>
<div class="a" style="left:33px;top:166px;width:227px;height:1px;background:#bdbdbd"></div>
<div class="a" style="left:143px;top:156px;width:6px;height:6px;border-radius:50%;background:#d0d0d0;border:1px solid #9a9a9a"></div>
<!-- FM tabs -->
<div class="a" style="left:35px;top:171px;width:40px;height:1px;background:#a0a0a0"></div>
<div class="a" style="left:74px;top:171px;width:41px;height:26px;background:#d6d6d6;border:1px solid #a8a8a8;border-bottom:none"></div>
<div class="a" style="left:33px;top:196px;width:227px;height:1px;background:#9a9a9a"></div>
<div class="a" style="left:35px;top:196px;width:39px;height:1px;background:#f7f7f7"></div>
<svg style="left:45px;top:175px" width="22" height="20" viewBox="0 0 22 20">
<rect x="1.0" y="1.0" width="17.5" height="15.5" rx="1.5" fill="#fafafa" stroke="#2a2a2a" stroke-width="1.2"/>
<rect x="3.3" y="3.1" width="7.8" height="3" fill="#ffd92a" stroke="#2e2400" stroke-width="1"/>
<rect x="12.7" y="3.1" width="3" height="3" fill="#ffd92a" stroke="#2e2400" stroke-width="1"/>
<path d="M6.1 8.1 H8.9 V10.7 H11.7 V13.7 H3.3 V10.7 H6.1 Z" fill="#ffd92a" stroke="#2e2400" stroke-width="1"/>
<path d="M14.1 16.5 V7.9 H18.5" fill="none" stroke="#2a2a2a" stroke-width="1"/>
<rect x="14.8" y="8.7" width="3.1999999999999993" height="7.5" fill="#dcdcdc"/>
</svg>
<svg style="left:84px;top:174px" width="24" height="20" viewBox="0 0 24 20">
<rect x="2.5" y="1.5" width="16" height="17" rx="1.5" fill="#f8f8f8" stroke="#333" stroke-width="1.1"/>
<rect x="3" y="2" width="15" height="3" fill="#4a90c2"/>
<rect x="4.5" y="7" width="3.5" height="2" fill="#2a6f98"/>
<rect x="4.5" y="10.5" width="3.5" height="2" fill="#2a6f98"/>
<rect x="4.5" y="14" width="3.5" height="2" fill="#2a6f98"/>
<path d="M9.5 8 H16.5 M9.5 11.5 H16.5 M9.5 15 H16.5" stroke="#333" stroke-width="1"/>
</svg>
<svg style="left:245px;top:176px" width="10" height="14" viewBox="0 0 10 14">
<path d="M2.5 2 L7 7 L2.5 12" fill="none" stroke="#6e6e6e" stroke-width="1.7"/>
</svg>
<!-- filter box -->
<div class="a" style="left:38px;top:197px;width:219px;height:26px;border:1px solid #cdcdcd;background:#f7f7f7"></div>
<svg style="left:40px;top:201px" width="20" height="20" viewBox="0 0 20 20">
<ellipse cx="9.5" cy="3" rx="8" ry="2" fill="#5aa9d6" stroke="#2f6f98" stroke-width="0.8"/>
<path d="M1.5 3.5 L7.5 11 V18.5 L11 16.5 V11 L17.5 3.5" fill="#f4f4f4" stroke="#333" stroke-width="1"/>
</svg>
<div class="a" style="left:33px;top:196px;width:1px;height:518px;background:#a0a0a0"></div>
<!-- tree -->
<svg style="left:36px;top:225px" width="22" height="20" viewBox="0 0 22 20">
<rect x="1.5" y="1.5" width="17.5" height="15.5" rx="1.5" fill="#fafafa" stroke="#2a2a2a" stroke-width="1.2"/>
<rect x="3.8" y="3.6" width="7.8" height="3" fill="#ffd92a" stroke="#2e2400" stroke-width="1"/>
<rect x="13.2" y="3.6" width="3" height="3" fill="#ffd92a" stroke="#2e2400" stroke-width="1"/>
<path d="M6.6 8.6 H9.4 V11.2 H12.2 V14.2 H3.8 V11.2 H6.6 Z" fill="#ffd92a" stroke="#2e2400" stroke-width="1"/>
<path d="M14.6 17.0 V8.4 H19.0" fill="none" stroke="#2a2a2a" stroke-width="1"/>
<rect x="15.3" y="9.2" width="3.1999999999999993" height="7.5" fill="#dcdcdc"/>
</svg>
<div class="t" style="left:60px;top:228px;font-size:12px;line-height:14px">Draw1</div>
<svg style="left:59px;top:247px" width="21" height="19" viewBox="0 0 21 19">
<path d="M1.5 3 C1.5 1.8 2 1.5 3 1.5 H7.5 L9 3.5 H17 C18 3.5 18.5 4 18.5 5 V16.5 C18.5 17.2 18 17.5 17.3 17.5 H2.7 C2 17.5 1.5 17.2 1.5 16.5 Z" fill="#ececec" stroke="#222" stroke-width="1.2"/>
<path d="M2.2 5.5 H17.8 V16.8 H2.2 Z" fill="#f6f6f6"/>
<path d="M1.8 5.2 H18.2" stroke="#999" stroke-width="0.8"/>
<text x="10.3" y="16" font-family="Liberation Serif" font-weight="bold" font-size="12.5" fill="#2a78a8" text-anchor="middle">A</text>
</svg>
<div class="t" style="left:84px;top:250px;font-size:12px;line-height:14px">Beschriftungen</div>
<div class="a" style="left:43px;top:274px;width:0;height:0;border-top:4px solid transparent;border-bottom:4px solid transparent;border-left:4px solid #555"></div>
<svg style="left:58px;top:269px" width="22" height="18" viewBox="0 0 22 18">
<rect x="1.6" y="1.6" width="18.8" height="15" rx="2" fill="#f2f2f2" stroke="#222" stroke-width="1.2"/>
<rect x="3.8" y="3.6" width="14.4" height="11" fill="#ececec" stroke="#a8a8a8" stroke-width="0.9"/>
<path d="M9.5 9.5 H18.2 M9.5 9.5 V14.6 M13 9.5 V14.6 M9.5 12 H18.2" stroke="#a8a8a8" stroke-width="0.9"/>
</svg>
<div class="t" style="left:83px;top:272px;font-size:12px;line-height:14px">Blatt1</div>
<!-- panel right border with notch -->
<div class="a" style="left:261px;top:148px;width:1px;height:566px;background:#fbfbfb"></div>
<div class="a" style="left:262px;top:147px;width:1px;height:254px;background:#858585"></div>
<div class="a" style="left:262px;top:438px;width:1px;height:276px;background:#858585"></div>
<div class="a" style="left:262px;top:400px;width:8px;height:39px;background:#f9f9f9;border:1px solid #858585;border-left:none"></div>
<div class="a" style="left:263px;top:416px;width:6px;height:6px;border-radius:50%;background:#d4d4d4;border:1px solid #9c9c9c"></div>
<div class="a" style="left:33px;top:713px;width:228px;height:1px;background:#f0f0f0"></div>

<!-- left -->
<!-- left toolbar -->
<div class="a" style="left:1px;top:147px;width:32px;height:230px;background:#f5f5f5"></div>
<div class="a" style="left:1px;top:377px;width:31px;height:1px;background:#444"></div>
<svg style="left:3px;top:150px" width="30" height="6" viewBox="0 0 30 6">
<g fill="#888"><circle cx="2" cy="2.5" r="1.2"/><circle cx="6" cy="2.5" r="1.2"/><circle cx="10" cy="2.5" r="1.2"/><circle cx="14" cy="2.5" r="1.2"/><circle cx="18" cy="2.5" r="1.2"/><circle cx="22" cy="2.5" r="1.2"/><circle cx="26" cy="2.5" r="1.2"/></g>
</svg>
<svg style="left:5px;top:165px" width="24" height="200" viewBox="0 0 24 200">
<!-- 1 note -->
<rect x="6.5" y="4.5" width="15" height="14" rx="1.5" fill="#f0f0f0" stroke="#222" stroke-width="1.2"/>
<text x="12.5" y="17" font-family="Liberation Sans" font-weight="bold" font-size="12" fill="#111" text-anchor="middle">A</text>
<circle cx="18" cy="8" r="1.6" fill="none" stroke="#222" stroke-width="0.9"/>
<circle cx="6" cy="4" r="2.6" fill="#f0b429"/>
<path d="M6 0 V8 M2 4 H10 M3.2 1.2 L8.8 6.8 M8.8 1.2 L3.2 6.8" stroke="#d9531e" stroke-width="0.8"/>
<!-- 2 disabled edit -->
<rect x="3.5" y="27.5" width="14" height="13" rx="1.5" fill="#f3f3f3" stroke="#cfcfcf" stroke-width="1.1"/>
<text x="9.5" y="39" font-family="Liberation Sans" font-weight="bold" font-size="11" fill="#d0d0d0" text-anchor="middle">A</text>
<path d="M10 42 L19 32 L21.5 34.5 L12.5 44.5 L9.5 45 Z" fill="#f3f3f3" stroke="#c9c9c9" stroke-width="1"/>
<!-- 3 note arrow -->
<rect x="3.5" y="53.5" width="14" height="14" rx="1.5" fill="#f0f0f0" stroke="#222" stroke-width="1.2"/>
<text x="9.5" y="66" font-family="Liberation Sans" font-weight="bold" font-size="12" fill="#111" text-anchor="middle">A</text>
<circle cx="15" cy="57" r="1.6" fill="none" stroke="#222" stroke-width="0.9"/>
<path d="M14 62 L19 67 M20.5 63 V68.5 H15" stroke="#2a8a1e" stroke-width="2.6" fill="none"/>
<!-- 4 disabled -->
<rect x="3.5" y="78.5" width="14" height="13" rx="1.5" fill="#f3f3f3" stroke="#cfcfcf" stroke-width="1.1"/>
<text x="9.5" y="90" font-family="Liberation Sans" font-weight="bold" font-size="11" fill="#d0d0d0" text-anchor="middle">A</text>
<path d="M15 88 H21 M18 85 V91 M12 93 H21" stroke="#cdcdcd" stroke-width="2"/>
<!-- 5 -->
<g transform="translate(0,2)">
<rect x="3.5" y="103.5" width="13" height="13" rx="1.5" fill="#f3f3f3" stroke="#cfcfcf" stroke-width="1.1"/>
<text x="9" y="115" font-family="Liberation Sans" font-weight="bold" font-size="11" fill="#d0d0d0" text-anchor="middle">A</text>
<rect x="14.5" y="106" width="6" height="12" rx="3" fill="#ddd" stroke="#c4c4c4" stroke-width="0.8"/>
<circle cx="17.5" cy="109.5" r="1.3" fill="#bbb"/><circle cx="17.5" cy="114.5" r="1.3" fill="#bbb"/>
</g>
<!-- 6 -->
<g transform="translate(0,2)">
<rect x="3.5" y="129.5" width="13" height="13" rx="1.5" fill="#f3f3f3" stroke="#cfcfcf" stroke-width="1.1"/>
<text x="9" y="141" font-family="Liberation Sans" font-weight="bold" font-size="11" fill="#d0d0d0" text-anchor="middle">A</text>
<path d="M9.5 134.5 H21 V147 H9.5 Z" fill="#dcdcdc" stroke="#c4c4c4" stroke-width="1"/>
<rect x="12" y="135.5" width="6.5" height="3.5" fill="#f3f3f3" stroke="#c4c4c4" stroke-width="0.6"/>
<rect x="11.5" y="141" width="7.5" height="5" fill="#f3f3f3" stroke="#c4c4c4" stroke-width="0.6"/>
</g>
<!-- 7 -->
<g transform="translate(0,1)">
<rect x="4" y="156" width="16" height="16" fill="none" stroke="#cfcfcf" stroke-width="1.6" stroke-dasharray="2 1.5"/>
<rect x="6.5" y="158.5" width="11" height="11" fill="#f3f3f3" stroke="#d6d6d6" stroke-width="0.8"/>
<text x="11.5" y="169" font-family="Liberation Sans" font-weight="bold" font-size="11" fill="#d0d0d0" text-anchor="middle">A</text>
<circle cx="15.5" cy="160.5" r="1.2" fill="none" stroke="#ccc" stroke-width="0.7"/>
</g>
<!-- 8 -->
<g transform="translate(0,2)">
<path d="M4 194 L18 183" stroke="#d0d0d0" stroke-width="4"/>
<circle cx="5.5" cy="192.5" r="3" fill="#f3f3f3" stroke="#c4c4c4" stroke-width="1.3"/>
<circle cx="16.5" cy="184" r="3.4" fill="#f3f3f3" stroke="#c4c4c4" stroke-width="1.3"/>
<path d="M3 186 L8.5 180.5 M5.5 180.5 H8.5 V183.5 M20.5 191.5 L15 197 M15 194 V197 H18" stroke="#c4c4c4" stroke-width="1.2" fill="none"/>
</g>
</svg>

<!-- bottom -->
<!-- sheet tabs -->
<div class="a" style="left:33px;top:714px;width:966px;height:1px;background:#858585"></div>
<div class="a" style="left:1px;top:715px;width:998px;height:15px;background:#f7f7f7"></div>
<div class="a" style="left:88px;top:715px;width:37px;height:15px;background:#d4d4d4;border-left:1px solid #9a9a9a;border-right:1px solid #9a9a9a"></div>
<div class="t" style="left:45px;top:715px;font-weight:bold;font-size:12px;line-height:14px;color:#111">Blatt1</div>
<svg style="left:97px;top:715px" width="20" height="14" viewBox="0 0 20 14">
<path d="M4 4.5 H16.5 V10.5 H12 L11 12.5 H7 L6 10.5 H4 Z" fill="#dfe7ee" stroke="#6b7b88" stroke-width="1"/>
<circle cx="5" cy="4" r="2.6" fill="#f7c531"/>
<path d="M5 0.3 V7.7 M1.3 4 H8.7 M2.4 1.4 L7.6 6.6 M7.6 1.4 L2.4 6.6" stroke="#e0792a" stroke-width="0.7"/>
</svg>
<!-- status bar -->
<div class="a" style="left:1px;top:731px;width:998px;height:19px;background:#f6f6f6"></div>
<div class="t" style="left:2px;top:733px;font-size:11.2px;line-height:14px;letter-spacing:0px">SOLIDWORKS Design Premium 2026 SP0.0</div>
<div class="t" style="left:276px;top:733px;font-size:12px;line-height:14px">135.54mm</div>
<div class="t" style="left:352px;top:733px;font-size:12px;line-height:14px">828.87mm</div>
<div class="t" style="left:422px;top:733px;font-size:12px;line-height:14px">0mm</div>
<div class="t" style="left:470px;top:733px;font-size:12px;line-height:14px">Under Defined</div>
<div class="t" style="left:564px;top:733px;font-size:12px;line-height:14px">Editing Blatt1</div>
<div class="t" style="left:672px;top:733px;font-size:12px;line-height:14px">1 : 1</div>
<div class="a" style="left:719px;top:738px;width:0;height:0;border-left:3px solid transparent;border-right:3px solid transparent;border-bottom:4px solid #222"></div>
<div class="a" style="left:746px;top:733px;width:1px;height:16px;background:#d6d6d6"></div>
<div class="t" style="left:850px;top:733px;font-size:12px;line-height:14px">MMGS</div>
<div class="a" style="left:904px;top:738px;width:0;height:0;border-left:3px solid transparent;border-right:3px solid transparent;border-bottom:4px solid #222"></div>
<svg style="left:936px;top:733px" width="20" height="16" viewBox="0 0 20 16">
<path d="M1.5 5 L5 1.5 L16.5 6 V9.5 L9.5 14.5 L1.5 10.5 Z" fill="#e6e6e6" stroke="#333" stroke-width="1.1" stroke-linejoin="round"/>
<path d="M1.5 5 L9.5 9.5 L16.5 6 M9.5 9.5 V14.5" fill="none" stroke="#333" stroke-width="1"/>
<circle cx="6.3" cy="4.3" r="1.9" fill="#f6f6f6" stroke="#333" stroke-width="0.9"/>
<path d="M10 6 L11.8 4.8" stroke="#444" stroke-width="1.2"/>
</svg>
<svg style="left:961px;top:733px" width="16" height="14" viewBox="0 0 16 14">
<rect x="1.5" y="1.5" width="12.5" height="11" rx="2" fill="#f6f6f6" stroke="#333" stroke-width="1.1"/>
<rect x="8" y="2.5" width="5" height="4" fill="#e4e4e4"/>
<path d="M3.5 4.2 H7 M3.5 7.4 H12 M3.5 9.6 H12" stroke="#333" stroke-width="1"/>
</svg>
<svg style="left:984px;top:740px" width="14" height="10" viewBox="0 0 14 10">
<g fill="#b8b8b8"><rect x="10" y="1" width="2" height="2"/><rect x="7" y="4" width="2" height="2"/><rect x="10" y="4" width="2" height="2"/><rect x="4" y="7" width="2" height="2"/><rect x="7" y="7" width="2" height="2"/><rect x="10" y="7" width="2" height="2"/></g>
</svg>
<div class="a" style="left:0;top:749px;width:1000px;height:1px;background:#505050"></div>

</body></html>
